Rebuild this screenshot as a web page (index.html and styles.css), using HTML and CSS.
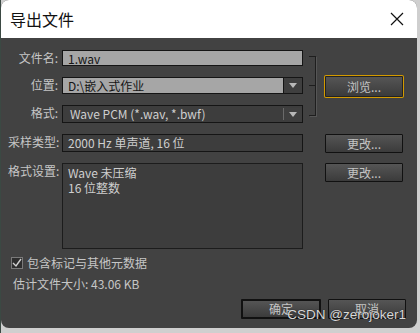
FILE: index.html
```html
<!DOCTYPE html>
<html lang="zh-CN">
<head>
    <meta charset="UTF-8">
    <title>导出文件</title>
    <link rel="stylesheet" href="styles.css">
</head>
<body>
    <div class="window">
        <header class="titlebar">
            <h1>导出文件</h1>
            <span class="close">
                <svg width="14" height="14" viewBox="0 0 14 14"><path d="M1 1 L13 13 M13 1 L1 13" stroke="#111" stroke-width="1.2" fill="none"/></svg>
            </span>
        </header>

        <section class="dialog">
            <div class="form-grid">
                <label class="lbl r1">文件名:</label>
                <div class="field light r1">1.wav</div>

                <label class="lbl r2">位置:</label>
                <div class="combo r2">
                    <div class="field light">D:\嵌入式作业</div>
                    <span class="drop"><i class="arrow"></i></span>
                </div>

                <label class="lbl r3">格式:</label>
                <div class="combo dark r3">
                    <div class="field">Wave PCM (*.wav, *.bwf)</div>
                    <span class="drop sep"><i class="arrow"></i></span>
                </div>

                <div class="bracket"><span class="tick"></span></div>
                <button class="btn browse">浏览...</button>

                <label class="lbl r4">采样类型:</label>
                <div class="field r4">2000 Hz 单声道, 16 位</div>
                <button class="btn r4 change">更改...</button>

                <label class="lbl r5">格式设置:</label>
                <div class="field area r5">
                    <div>Wave 未压缩</div>
                    <div>16 位整数</div>
                </div>
                <button class="btn r5 change top">更改...</button>
            </div>

            <label class="check">
                <span class="box">
                    <svg width="10" height="10" viewBox="0 0 10 10"><path d="M1 5 L4 8 L9 1" stroke="#d0d0d0" stroke-width="1.4" fill="none"/></svg>
                </span>
                包含标记与其他元数据
            </label>
            <p class="size">估计文件大小: 43.06 KB</p>

            <div class="actions">
                <button class="btn ok">确定</button>
                <button class="btn cancel">取消</button>
                <span class="watermark">CSDN @zerojoker1</span>
            </div>
        </section>
    </div>
</body>
</html>
```

FILE: styles.css
```css
html {
    background: #cfcfcf;
}
body {
    margin: 0;
    width: 420px;
    height: 333px;
    font-family: "Noto Sans CJK SC", "Liberation Sans", sans-serif;
    font-size: 12px;
    background: linear-gradient(to right, #3b4943 0, #3b4943 1px, #cfcfcf 1px);
}

.window {
    margin-left: 1px;
    width: 416px;
    height: 328px;
    border-radius: 8px;
    overflow: hidden;
    background: #424242;
    display: flex;
    flex-direction: column;
}

.titlebar {
    height: 38px;
    background: #fff;
    display: flex;
    align-items: center;
    justify-content: space-between;
    padding: 0 13px 0 9px;
    flex-shrink: 0;
}
.titlebar h1 {
    margin: 0;
    font-size: 16px;
    font-weight: 400;
    color: #111;
}
.close {
    display: flex;
}

.dialog {
    position: relative;
    flex: 1;
    padding: 12px 11px 0 7px;
    color: #c6c6c6;
}

.form-grid {
    display: grid;
    grid-template-columns: 54px 241px 21px 80px;
    grid-template-rows: 16px 17px 18px 18px 86px;
    row-gap: 11px;
}
.r1 { grid-row: 1; }
.r2 { grid-row: 2; }
.r3 { grid-row: 3; }
.r4 { grid-row: 4; }
.r5 { grid-row: 5; }

.lbl {
    grid-column: 1;
    text-align: right;
    padding-right: 4px;
    line-height: 16px;
    white-space: nowrap;
}
.lbl.r5 {
    line-height: 16px;
}

.field {
    grid-column: 2;
    box-sizing: border-box;
    border: 1px solid #151515;
    background: #3d3d3d;
    color: #cfcfcf;
    padding: 0 5px;
    line-height: 15px;
    white-space: nowrap;
    overflow: hidden;
}
.field.light {
    background: #a6a6a6;
    color: #151515;
}
.field.area {
    padding-top: 1px;
    line-height: 15px;
    border-color: #1c1c1c;
}

.combo {
    grid-column: 2;
    display: flex;
}
.combo .field {
    flex: 1;
    line-height: 16px;
}
.combo.dark {
    border: 1px solid #151515;
    background: #3d3d3d;
}
.combo.dark .field {
    border: none;
    background: transparent;
    padding-left: 7px;
}
.drop {
    width: 19px;
    box-sizing: border-box;
    border: 1px solid #151515;
    border-left: none;
    background: #3f3f3f;
    display: flex;
    align-items: center;
    justify-content: center;
}
.drop.sep {
    border: none;
    border-left: 1px solid #6a6a6a;
    margin: 2px 0;
}
.arrow {
    width: 0;
    height: 0;
    border-left: 4px solid transparent;
    border-right: 4px solid transparent;
    border-top: 5px solid #b8b8b8;
}

.bracket {
    grid-column: 3;
    grid-row: 1 / 4;
    margin: 6px 0 7px 6px;
    width: 6px;
    border: 1px solid #1e1e1e;
    border-left: none;
    box-shadow: 1px 1px 0 #565656;
    position: relative;
}
.bracket .tick {
    position: absolute;
    left: 0;
    right: 0;
    top: 28px;
    border-top: 1px solid #1e1e1e;
}

.btn {
    font: inherit;
    font-size: 12px;
    color: #c4c4c4;
    background: linear-gradient(#555, #3b3b3b);
    border: 1px solid #111;
    border-radius: 1px;
    padding: 0;
    height: 19px;
    line-height: 16px;
}
.browse {
    grid-column: 4;
    grid-row: 2;
    height: 21px;
    margin-top: -1px;
    box-shadow: 0 0 0 1px #d39a00;
    border-color: #222;
    width: 78px;
    margin-left: 1px;
}
.change {
    grid-column: 4;
    width: 78px;
    margin-left: 1px;
}
.change.top {
    align-self: start;
}

.check {
    display: flex;
    align-items: center;
    gap: 4px;
    margin-top: 7px;
    padding-left: 3px;
    line-height: 14px;
}
.box {
    width: 12px;
    height: 12px;
    box-sizing: border-box;
    border: 1px solid #7a7a7a;
    background: #2e2e2e;
    display: flex;
    align-items: center;
    justify-content: center;
}

.size {
    margin: 7px 0 0 5px;
    line-height: 14px;
}

.actions {
    position: relative;
    display: flex;
    justify-content: flex-end;
    gap: 7px;
    margin-top: 8px;
}
.ok {
    width: 80px;
    height: 20px;
    border: 2px solid #111;
}
.cancel {
    width: 78px;
    height: 20px;
}
.watermark {
    position: absolute;
    right: 0;
    top: 8px;
    font-family: "Liberation Sans", sans-serif;
    font-size: 13.5px;
    color: rgba(255, 255, 255, 0.85);
    text-shadow: 0 0 1px #000;
}
```
